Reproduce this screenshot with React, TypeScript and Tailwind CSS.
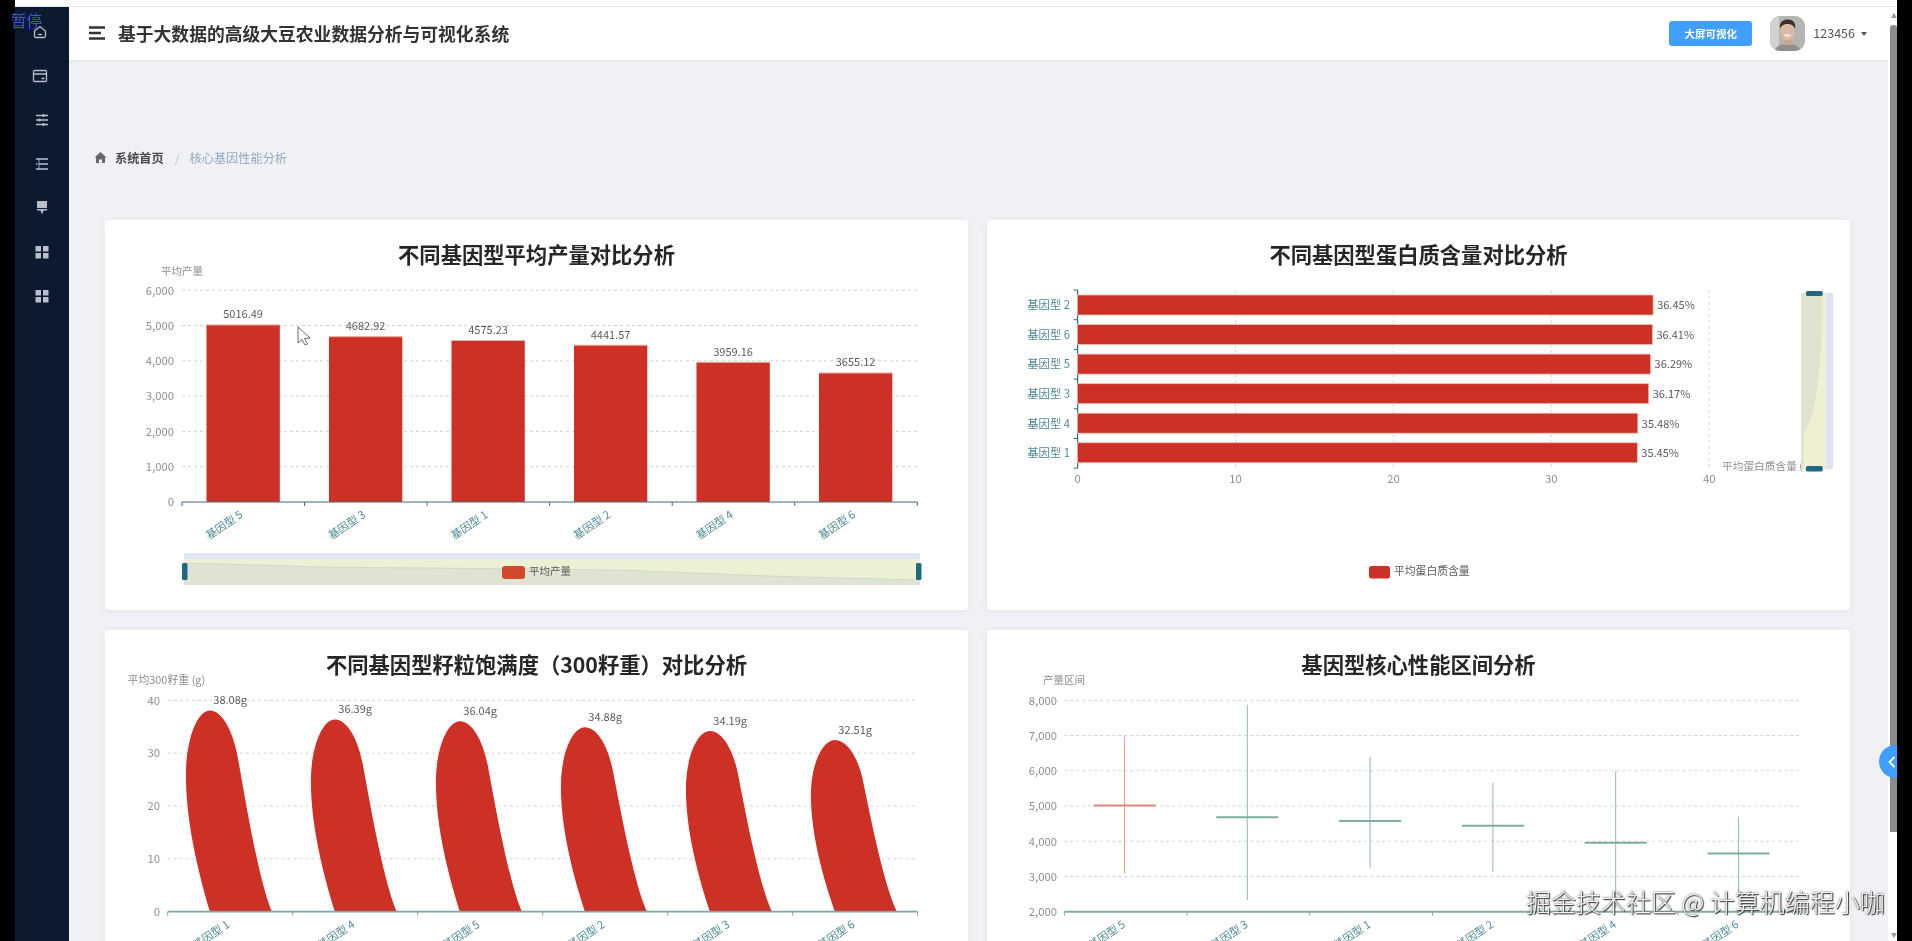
import type { ReactNode } from 'react'

const RED = '#cd3126'
const GRAY = '#8b8d93'
const TEAL = '#4f8a94'
const LABEL = '#5a5a5a'
const HANDLE = '#1f6a80'

function T({
  x,
  y,
  children,
  anchor = 'middle',
  size = 11.3,
  color = GRAY,
  rotate,
}: {
  x: number
  y: number
  children: ReactNode
  anchor?: 'start' | 'middle' | 'end'
  size?: number
  color?: string
  rotate?: number
}) {
  return (
    <text
      x={x}
      y={y - 0.7}
      textAnchor={anchor}
      dominantBaseline="central"
      fontSize={size}
      fill={color}
      transform={rotate ? `rotate(${rotate} ${x} ${y})` : undefined}
    >
      {children}
    </text>
  )
}

function HGrid({ ys, x1, x2 }: { ys: number[]; x1: number; x2: number }) {
  return (
    <>
      {ys.map((y) => (
        <line key={y} x1={x1} x2={x2} y1={y} y2={y} stroke="#d2d2d2" strokeDasharray="3 3" />
      ))}
    </>
  )
}

function XAxis({
  x1,
  step,
  y,
  labels,
  color,
  width = 1.2,
}: {
  x1: number
  step: number
  y: number
  labels: string[]
  color: string
  width?: number
}) {
  return (
    <>
      <line x1={x1} x2={x1 + step * labels.length} y1={y} y2={y} stroke={color} strokeWidth={width} />
      {[0, 1, 2, 3, 4, 5, 6].map((i) => (
        <line key={i} x1={x1 + step * i} x2={x1 + step * i} y1={y} y2={y + 4} stroke={color} />
      ))}
      {labels.map((l, i) => (
        <T key={l} x={x1 + step * (i + 0.5) - 2} y={y + 11} anchor="end" size={11} color={TEAL} rotate={-34}>
          {l}
        </T>
      ))}
    </>
  )
}

function YieldChart() {
  const data: [string, number][] = [
    ['基因型 5', 5016.49],
    ['基因型 3', 4682.92],
    ['基因型 1', 4575.23],
    ['基因型 2', 4441.57],
    ['基因型 4', 3959.16],
    ['基因型 6', 3655.12],
  ]
  const base = 502
  const k = 0.0353
  const ticks = [6000, 5000, 4000, 3000, 2000, 1000, 0]
  const area = data.map(([, v], i) => `${184 + (736 / 5) * i},${563 + ((5016.49 - v) / 1361.37) * 17}`).join(' ')
  return (
    <svg viewBox="105 260 863 350" className="-mt-[8px] block h-[350px] w-[863px]">
      <T x={182} y={271} size={10.5}>平均产量</T>
      <HGrid ys={ticks.slice(0, 6).map((t) => base - t * k)} x1={182} x2={917.5} />
      {ticks.map((t) => (
        <T key={t} x={174} y={base - t * k} anchor="end">{t.toLocaleString('en-US')}</T>
      ))}
      {data.map(([name, v], i) => {
        const x = 206.5 + 122.5 * i
        const top = base - v * k
        return (
          <g key={name}>
            <rect x={x} y={top} width={73.3} height={base - top} fill={RED} />
            <rect x={x} y={top - 0.5} width={73.3} height={1} fill="#eeb0a8" />
            <T x={x + 36.6} y={top - 11} size={11} color={LABEL}>{v}</T>
          </g>
        )
      })}
      <XAxis x1={182} step={122.55} y={base} labels={data.map((d) => d[0])} color="#3d6f78" />
      <path d="M298 327 L298 343 L302 339.5 L305 345 L307.5 344 L304.5 338.5 L310 338 Z" fill="#fff" stroke="#444" strokeWidth={0.8} />
      {/* data zoom */}
      <rect x={184} y={553} width={736} height={6} fill="#dfe5f2" />
      <rect x={184} y={559} width={736} height={26} fill="#eef0d5" />
      <polygon points={`184,585 ${area} 920,585`} fill="#dfe4d2" />
      <polyline points={area} fill="none" stroke="#cfd9c8" />
      <rect x={182} y={563} width={5.5} height={17} rx={1.5} fill={HANDLE} />
      <rect x={916} y={563} width={5.5} height={17} rx={1.5} fill={HANDLE} />
      <rect x={502} y={566} width={23} height={13} rx={3} fill="#d1482a" />
      <T x={529} y={571} anchor="start" size={10.5} color={LABEL}>平均产量</T>
    </svg>
  )
}

function ProteinChart() {
  const data: [string, number][] = [
    ['基因型 2', 36.45],
    ['基因型 6', 36.41],
    ['基因型 5', 36.29],
    ['基因型 3', 36.17],
    ['基因型 4', 35.48],
    ['基因型 1', 35.45],
  ]
  const left = 1077.6
  const k = 15.79
  return (
    <svg viewBox="987 260 863 350" className="-mt-[8px] block h-[350px] w-[863px]">
      {[0, 10, 20, 30, 40].map((t) => (
        <g key={t}>
          {t > 0 && <line x1={left + t * k} x2={left + t * k} y1={290} y2={468} stroke="#d8d8d8" strokeDasharray="3 3" />}
          <T x={left + t * k} y={479}>{t}</T>
        </g>
      ))}
      <line x1={left} x2={left} y1={290} y2={468.3} stroke="#2f6f7a" strokeWidth={1.2} />
      {[0, 1, 2, 3, 4, 5, 6].map((i) => (
        <line key={i} x1={left - 4} x2={left} y1={290 + 29.7 * i} y2={290 + 29.7 * i} stroke="#2f6f7a" />
      ))}
      {data.map(([name, v], i) => {
        const cy = 305 + 29.55 * i
        return (
          <g key={name}>
            <T x={1070} y={cy} anchor="end" color={TEAL}>{name}</T>
            <rect x={left} y={cy - 10} width={v * k} height={20} fill={RED} stroke="#f3bcb4" strokeWidth={0.8} />
            <T x={left + v * k + 4} y={cy} anchor="start" size={11} color={LABEL}>{v}%</T>
          </g>
        )
      })}
      <T x={1722} y={466} anchor="start" size={10.7}>平均蛋白质含量 (%)</T>
      {/* vertical data zoom */}
      <rect x={1826} y={293} width={7} height={176} fill="#dde3ef" />
      <rect x={1801} y={293} width={25} height={176} fill="#eff0d2" />
      <path d="M1801 293 L1822 293 C1822 340 1820.5 370 1815 403 C1812 420 1806 428 1804 437 L1803 469 L1801 469 Z" fill="#dfe3d0" />
      <rect x={1806} y={291} width={16.7} height={5} rx={1.5} fill={HANDLE} />
      <rect x={1806} y={466} width={16.7} height={5.5} rx={1.5} fill={HANDLE} />
      <rect x={1369} y={566} width={21} height={12.5} rx={2.5} fill={RED} />
      <T x={1394} y={571} anchor="start" size={10.8} color={LABEL}>平均蛋白质含量</T>
    </svg>
  )
}

function SeedChart() {
  const data: [string, number][] = [
    ['基因型 1', 38.08],
    ['基因型 4', 36.39],
    ['基因型 5', 36.04],
    ['基因型 2', 34.88],
    ['基因型 3', 34.19],
    ['基因型 6', 32.51],
  ]
  const base = 911.7
  const k = 5.285
  return (
    <svg viewBox="105 670 863 350" className="-mt-[8px] block h-[350px] w-[863px]">
      <T x={127.5} y={680} anchor="start" size={10.9}>平均300籽重 (g)</T>
      <HGrid ys={[40, 30, 20, 10].map((t) => base - t * k)} x1={167.7} x2={917.5} />
      {[40, 30, 20, 10, 0].map((t) => (
        <T key={t} x={160} y={base - t * k} anchor="end">{t}</T>
      ))}
      {data.map(([name, v], i) => {
        const c = 167.7 + 125 * i + 62.5
        const cx = c - 20.3
        const h = v * k
        const p = (dx: number, t: number) => `${cx + dx} ${base - t * h}`
        const d = `M${p(0, 0)} C${p(-12, 0.2)} ${p(-24, 0.45)} ${p(-24, 0.68)} C${p(-24, 0.85)} ${p(-13, 1)} ${p(0, 1)} C${p(12, 1)} ${p(24, 0.9)} ${p(29, 0.736)} C${p(34, 0.6)} ${p(48, 0.17)} ${p(62, 0)} Z`
        return (
          <g key={name}>
            <path d={d} fill={RED} />
            <T x={c} y={base - h - 10.5} size={11} color={LABEL}>{v}g</T>
          </g>
        )
      })}
      <XAxis x1={167.7} step={125} y={base} labels={data.map((d) => d[0])} color="#7fa5a8" width={1.8} />
    </svg>
  )
}

function RangeChart() {
  const data: [string, number, number, number][] = [
    ['基因型 5', 5016, 736.7, 873.3],
    ['基因型 3', 4682, 705, 900],
    ['基因型 1', 4575, 756.7, 867.7],
    ['基因型 2', 4441, 782.7, 871.7],
    ['基因型 4', 3959, 770.7, 908],
    ['基因型 6', 3655, 816.7, 897],
  ]
  const base = 911.7
  const k = 0.03523
  return (
    <svg viewBox="987 670 863 350" className="-mt-[8px] block h-[350px] w-[863px]">
      <T x={1064} y={680} size={10.5}>产量区间</T>
      <HGrid ys={[8000, 7000, 6000, 5000, 4000, 3000].map((t) => base - (t - 2000) * k)} x1={1064.4} x2={1800.5} />
      {[8000, 7000, 6000, 5000, 4000, 3000, 2000].map((t) => (
        <T key={t} x={1057} y={base - (t - 2000) * k} anchor="end">{t.toLocaleString('en-US')}</T>
      ))}
      {data.map(([name, v, y1, y2], i) => {
        const cx = 1124.5 + 122.8 * i
        const y = base - (v - 2000) * k
        const up = i === 0
        return (
          <g key={name}>
            <line x1={cx} x2={cx} y1={y1} y2={y2} stroke={up ? '#ec9c95' : '#93bba6'} />
            <line x1={cx - 31} x2={cx + 31} y1={y} y2={y} stroke={up ? '#dd8780' : '#7fae96'} strokeWidth={2} />
          </g>
        )
      })}
      <XAxis x1={1064.4} step={122.7} y={base} labels={data.map((d) => d[0])} color="#86aaa6" width={2} />
    </svg>
  )
}

function Card({ title, children }: { title: string; children: ReactNode }) {
  return (
    <section className="h-[390px] overflow-hidden rounded-[4px] bg-white shadow-[0_1px_6px_rgba(0,0,0,0.06)]">
      <h3 className="pt-[20px] text-center text-[21.3px] leading-[28px] font-bold text-[#262626]">{title}</h3>
      {children}
    </section>
  )
}

function SideIcon({ children, shift = false }: { children: ReactNode; shift?: boolean }) {
  return (
    <div className={shift ? 'flex h-[44px] items-center justify-center pr-[5px]' : 'flex h-[44px] items-center justify-center'}>
      <svg viewBox="0 0 16 16" className="h-[16px] w-[16px] text-[#b9bfca]" fill="none" stroke="currentColor" strokeWidth={1.3}>
        {children}
      </svg>
    </div>
  )
}

const Grid4 = (
  <path d="M1.5 2h5.5v5.5h-5.5zM9 2h5.5v5.5h-5.5zM1.5 9h5.5v5.5h-5.5zM9 9h5.5v5.5h-5.5z" fill="currentColor" stroke="none" />
)

function Avatar() {
  return (
    <svg viewBox="0 0 35 35" className="h-[35px] w-[35px] rounded-[10px]">
      <rect width="35" height="35" fill="#b5b5b2" />
      <rect width="9" height="35" fill="#d2d1ce" />
      <path d="M4 35 C7 29 12 28 17 28 C23 28 28 29 32 35 Z" fill="#8f8f8c" />
      <rect x="14" y="21" width="7.5" height="8" fill="#c9a58d" />
      <ellipse cx="17.5" cy="15" rx="7" ry="9.5" fill="#dcb9a2" />
      <path d="M10 13 C9 5 14 3.5 18 3.5 C24 3.5 26 8 25 13 C24 9.5 21 8 17.5 8 C14 8 11 9.5 10 13 Z" fill="#3b3029" />
      <path d="M13.5 18.5 C15 21.5 20 21.5 21.5 18.5 Z" fill="#f6f0ea" />
    </svg>
  )
}

export default function App() {
  return (
    <div className="relative flex h-[941px] w-full overflow-hidden bg-black font-['Noto_Sans_CJK_SC','Noto_Sans',sans-serif] blur-[0.5px]">
      <div className="w-[15px] shrink-0" />
      <div className="flex min-w-0 flex-1 flex-col bg-white">
        <div className="h-[7px] shrink-0 border-b border-[#e3e5e8]" />
        <div className="flex min-h-0 flex-1">
          <aside className="w-[54px] shrink-0 bg-[#0c1a30] pt-[3px]">
            <SideIcon shift>
              <path d="M2.5 7 L8 2.5 L13.5 7 V12 Q13.5 13.5 12 13.5 H4 Q2.5 13.5 2.5 12 Z" />
              <path d="M6 10.5 H10" />
            </SideIcon>
            <SideIcon shift>
              <rect x="1.5" y="2.5" width="13" height="11" rx="1.2" />
              <path d="M1.5 6 H14.5 M9.5 10.5 H12.5" />
            </SideIcon>
            <SideIcon>
              <path d="M2 3.5 H14 M2 8 H14 M2 12.5 H14" />
              <path d="M9.5 2 V5 M5.5 6.5 V9.5 M9.5 11 V14" strokeWidth={1.6} />
            </SideIcon>
            <SideIcon>
              <path d="M2 3 H14 M5 8 H14 M2 13 H14 M2 8 H3.5" strokeWidth={1.6} />
              <path d="M5 2.5 V13.5" strokeWidth={0.8} />
            </SideIcon>
            <SideIcon>
              <path d="M3 1 H13 V8 H3 Z M3 9 H13 V10.5 H9.5 L8 14.5 L6.5 10.5 H3 Z" fill="currentColor" stroke="none" />
            </SideIcon>
            <SideIcon>{Grid4}</SideIcon>
            <SideIcon>{Grid4}</SideIcon>
          </aside>

          <main className="min-w-0 flex-1 overflow-hidden bg-[#eff1f5]">
            <header className="flex h-[53px] items-center justify-between bg-white pr-[21px] pl-[20px] shadow-[0_1px_4px_rgba(0,21,41,0.06)]">
              <div className="flex items-center gap-[13px]">
                <svg viewBox="0 0 16 14" className="h-[14px] w-[16px]" stroke="#333" strokeWidth={2.4}>
                  <path d="M0 1.5 H16 M0 7 H12 M0 12.5 H16" />
                </svg>
                <h1 className="text-[17.8px] leading-none font-bold text-[#333]">基于大数据的高级大豆农业数据分析与可视化系统</h1>
              </div>
              <div className="flex items-center">
                <button className="h-[25px] w-[83px] rounded-[3px] bg-[#409eff] text-[10.5px] font-bold text-white">大屏可视化</button>
                <div className="ml-[18px]">
                  <Avatar />
                </div>
                <span className="ml-[8px] text-[12.5px] text-[#555]">123456</span>
                <span className="ml-[6px] h-0 w-0 border-x-[3px] border-t-[4px] border-x-transparent border-t-[#555]" />
              </div>
            </header>

            <nav className="flex h-[160px] items-start gap-[8px] pt-[88px] pl-[25px] text-[12.2px] leading-[20px]">
              <svg viewBox="0 0 12 11" className="mt-[4px] h-[11px] w-[13px]" fill="#666">
                <path d="M6 0 L12 5.5 H10.5 V11 H7.5 V7.5 H4.5 V11 H1.5 V5.5 H0 Z" />
              </svg>
              <span className="font-bold text-[#4a4a4a]">系统首页</span>
              <span className="mr-[2px] ml-[3px] text-[#c0c4cc]">/</span>
              <span className="text-[#97a8be]">核心基因性能分析</span>
            </nav>

            <div className="grid grid-cols-[863px_863px] gap-[20px_19px] pl-[36px]">
              <Card title="不同基因型平均产量对比分析"><YieldChart /></Card>
              <Card title="不同基因型蛋白质含量对比分析"><ProteinChart /></Card>
              <Card title="不同基因型籽粒饱满度（300籽重）对比分析"><SeedChart /></Card>
              <Card title="基因型核心性能区间分析"><RangeChart /></Card>
            </div>
          </main>

          <div className="flex w-[9px] shrink-0 flex-col items-end bg-white">
            <span className="mt-[6px] h-0 w-0 border-x-[3.5px] border-b-[5px] border-x-transparent border-b-[#9a9a9a]" />
            <div className="mt-[7px] h-[807px] w-[7px] rounded-t-[3px] bg-[#8a8a8a]" />
            <span className="mt-auto mb-[3px] h-0 w-0 border-x-[3.5px] border-t-[5px] border-x-transparent border-t-[#9a9a9a]" />
          </div>
        </div>
      </div>
      <div className="z-10 w-[15px] shrink-0 bg-black" />

      <span className="absolute top-[9px] left-[11px] text-[15.5px] leading-[22px] text-[#3f57cf]">暂停</span>
      <button className="absolute top-[745px] left-[1879px] flex h-[33px] w-[18px] items-center justify-end rounded-l-full bg-[#409eff] pr-[1px]">
        <svg viewBox="0 0 8 12" className="h-[12px] w-[8px]" fill="none" stroke="#fff" strokeWidth={1.8}>
          <path d="M6.5 1 L1.5 6 L6.5 11" />
        </svg>
      </button>
      <span className="absolute top-[884px] left-[1526px] text-[25px] leading-[34px] font-light whitespace-nowrap text-[#f4f4f4] [text-shadow:0_0_2px_#333,1px_1px_1px_#333]">
        掘金技术社区 @ 计算机编程小咖
      </span>
    </div>
  )
}
